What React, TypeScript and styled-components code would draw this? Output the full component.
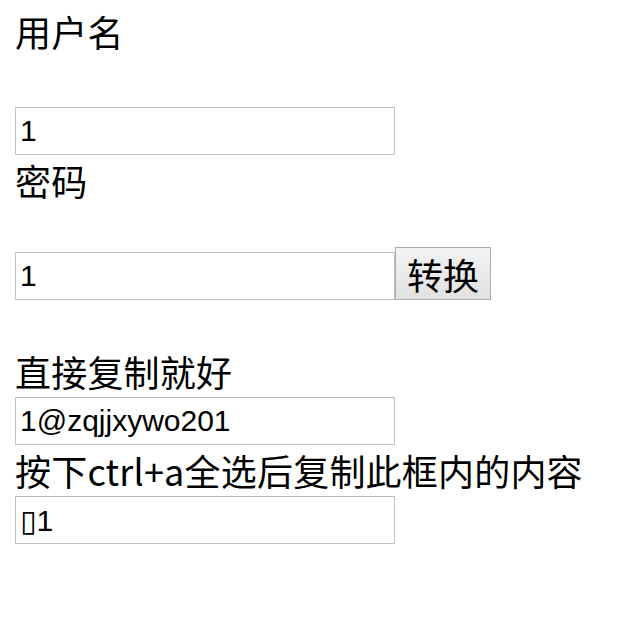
import { FC } from "react";
import { styled, createGlobalStyle } from "styled-components";

const GlobalStyle = createGlobalStyle`
  body {
    margin: 0;
    background: #ffffff;
    color: #000000;
    font-family: "Microsoft YaHei", "Noto Sans CJK SC", sans-serif;
  }
`;

const App: FC = () => {
  return (
    <>
      <GlobalStyle />
      <StyledForm>
        <StyledLabel $lift={2}>用户名</StyledLabel>
        <StyledInput $gap={48} defaultValue="1" />
        <StyledLabel>密码</StyledLabel>
        <StyledRow>
          <StyledInput defaultValue="1" />
          <StyledButton type="button">转换</StyledButton>
        </StyledRow>
        <StyledLabel $gap={46}>直接复制就好</StyledLabel>
        <StyledInput defaultValue="1@zqjjxywo201" readOnly />
        <StyledLabel>按下ctrl+a全选后复制此框内的内容</StyledLabel>
        <StyledInput defaultValue={"\u25AF1"} readOnly />
      </StyledForm>
    </>
  );
};

export default App;

const StyledForm = styled.div`
  display: flex;
  flex-direction: column;
  align-items: flex-start;
  padding: 8px 15px;
`;

const StyledLabel = styled.div<{ $gap?: number; $lift?: number }>`
  height: 51px;
  margin-top: ${({ $gap }) => $gap ?? 0}px;
  line-height: ${({ $lift }) => 51 - 2 * ($lift ?? 0)}px;
  font-size: 36px;
  letter-spacing: 0.2px;
  white-space: nowrap;
`;

const StyledRow = styled.div`
  display: flex;
  align-items: flex-end;
  margin-top: 41px;
`;

const StyledInput = styled.input<{ $gap?: number }>`
  box-sizing: border-box;
  width: 380px;
  height: 48px;
  margin: ${({ $gap }) => $gap ?? 0}px 0 0 0;
  padding: 0 4px;
  border: 1px solid #c4c4c4;
  border-top-color: #b8b8b8;
  border-radius: 0;
  outline: none;
  background: #ffffff;
  color: #000000;
  font-family: "Liberation Sans", "DejaVu Sans", sans-serif;
  font-size: 30px;
`;

const StyledButton = styled.button`
  box-sizing: border-box;
  width: 96px;
  height: 53px;
  margin: 0;
  padding: 0;
  border: 1px solid #adadad;
  border-radius: 0;
  background: linear-gradient(#f3f3f3, #e1e1e1);
  color: #000000;
  font-family: "Microsoft YaHei", "Noto Sans CJK SC", sans-serif;
  font-size: 36px;
  line-height: 1;
  cursor: pointer;
`;
